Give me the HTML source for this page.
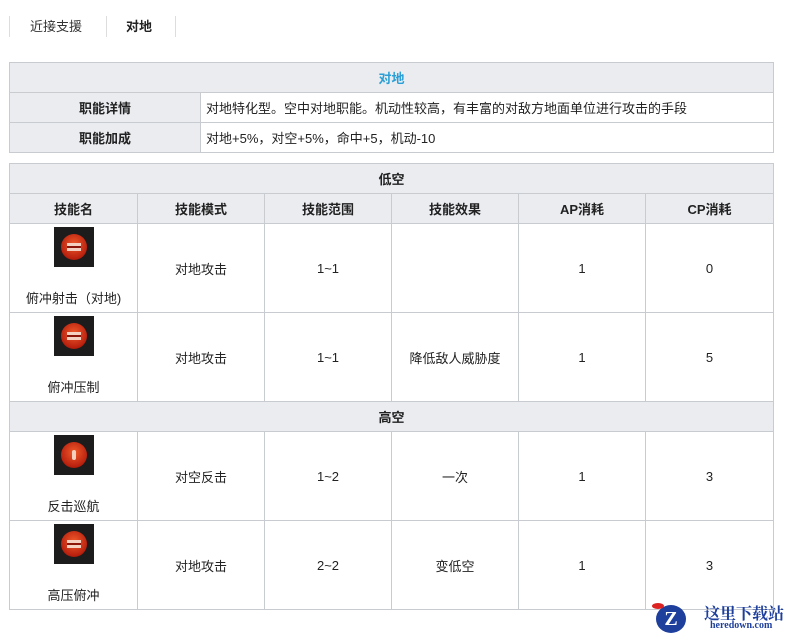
<!DOCTYPE html>
<html><head><meta charset="utf-8"><style>
body{margin:0;width:785px;height:638px;background:#fff;font-family:"Liberation Sans","Noto Sans CJK SC",sans-serif;font-size:13px;color:#222;position:relative;overflow:hidden}
.tab{position:absolute;top:16px;height:21px;border-left:1px solid #ddd;line-height:21px}
table{position:absolute;left:9px;border-collapse:collapse;table-layout:fixed}
td{border:1px solid #c8ccd1;text-align:center;padding:0;vertical-align:middle}
.h{background:#eaecf0;font-weight:bold}
.ic{width:40px;height:40px;background:#1c1c1c;margin:0 auto;display:flex;align-items:center;justify-content:center}
.ic i{width:26px;height:26px;border-radius:50%;background:radial-gradient(circle at 50% 40%,#f05a2a,#b8200e 70%,#5a0a04);display:flex;align-items:center;justify-content:center}
.ic b{width:14px;height:8px;background:linear-gradient(#f4d0c0 0 3px,#8a1508 3px 5px,#f4d0c0 5px)}
.cell{display:flex;flex-direction:column;align-items:center;justify-content:space-between;height:80px;margin-top:-2px}
</style></head><body>
<div class="tab" style="left:9px;width:96px"><span style="margin-left:20px;color:#333">近接支援</span></div>
<div class="tab" style="left:106px;width:68px;font-weight:bold"><span style="margin-left:19px">对地</span></div>
<div class="tab" style="left:175px;width:1px"></div>
<table style="top:62px;width:765px">
<col style="width:191px"><col>
<tr style="height:30px"><td class="h" colspan="2" style="color:#2a9fd6">对地</td></tr>
<tr style="height:30px"><td class="h">职能详情</td><td style="text-align:left;padding-left:5px">对地特化型。空中对地职能。机动性较高，有丰富的对敌方地面单位进行攻击的手段</td></tr>
<tr style="height:30px"><td class="h">职能加成</td><td style="text-align:left;padding-left:5px">对地+5%，对空+5%，命中+5，机动-10</td></tr>
</table>
<table style="top:163px;width:765px">
<col style="width:128px"><col style="width:127px"><col style="width:127px"><col style="width:127px"><col style="width:127px"><col>
<tr style="height:30px"><td class="h" colspan="6">低空</td></tr>
<tr style="height:30px"><td class="h">技能名</td><td class="h">技能模式</td><td class="h">技能范围</td><td class="h">技能效果</td><td class="h">AP消耗</td><td class="h">CP消耗</td></tr>
<tr style="height:89px"><td><div class="cell"><div class="ic"><i><b></b></i></div><span>俯冲射击（对地)</span></div></td><td>对地攻击</td><td>1~1</td><td></td><td>1</td><td>0</td></tr>
<tr style="height:89px"><td><div class="cell"><div class="ic"><i><b></b></i></div><span>俯冲压制</span></div></td><td>对地攻击</td><td>1~1</td><td>降低敌人威胁度</td><td>1</td><td>5</td></tr>
<tr style="height:30px"><td class="h" colspan="6">高空</td></tr>
<tr style="height:89px"><td><div class="cell"><div class="ic"><i><b style="width:4px;height:10px;background:#f4d0c0;border-radius:2px"></b></i></div><span>反击巡航</span></div></td><td>对空反击</td><td>1~2</td><td>一次</td><td>1</td><td>3</td></tr>
<tr style="height:89px"><td><div class="cell"><div class="ic"><i><b></b></i></div><span>高压俯冲</span></div></td><td>对地攻击</td><td>2~2</td><td>变低空</td><td>1</td><td>3</td></tr>
</table>
<div style="position:absolute;left:652px;top:603px;width:40px;height:30px">
<div style="position:absolute;left:4px;top:2px;width:30px;height:28px;border-radius:50%;background:#1e3f9c;color:#fff;font:bold 20px 'Liberation Serif',serif;text-align:center;line-height:28px">Z</div>
<div style="position:absolute;left:0;top:0;width:12px;height:6px;border-radius:50%;background:#d22"></div></div>
<div style="position:absolute;left:704px;top:601px;font:bold 16px 'Noto Serif CJK SC',serif;color:#1e3f9c">这里下载站</div>
<div style="position:absolute;left:710px;top:620px;font:bold 10px 'Liberation Serif',serif;color:#1e3f9c">heredown.com</div>
</body></html>
